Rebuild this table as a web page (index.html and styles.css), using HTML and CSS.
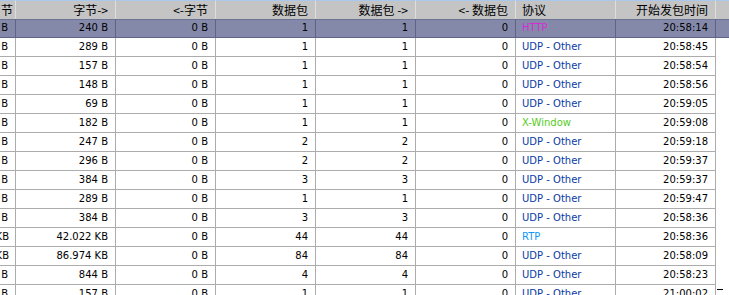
FILE: index.html
```html
<!DOCTYPE html>
<html lang="zh-CN">
<head>
<meta charset="utf-8">
<title>会话列表</title>
<link rel="stylesheet" href="styles.css">
</head>
<body>
<div class="view">
  <table class="grid">
    <thead>
      <tr>
        <th class="c-first clip">节</th>
        <th class="c-num">字节-&gt;</th>
        <th class="c-num">&lt;-字节</th>
        <th class="c-num">数据包</th>
        <th class="c-num">数据包 -&gt;</th>
        <th class="c-num">&lt;- 数据包</th>
        <th class="c-proto">协议</th>
        <th class="c-num">开始发包时间</th>
        <th class="c-fill"></th>
      </tr>
    </thead>
    <tbody>
      <tr class="sel"><td class="clip">B</td><td>240 B</td><td>0 B</td><td>1</td><td>1</td><td>0</td><td class="p"><span class="http">HTTP</span></td><td>20:58:14</td><td class="fill"></td></tr>
      <tr><td class="clip">B</td><td>289 B</td><td>0 B</td><td>1</td><td>1</td><td>0</td><td class="p"><span class="udp">UDP - Other</span></td><td>20:58:45</td><td class="fill"></td></tr>
      <tr><td class="clip">B</td><td>157 B</td><td>0 B</td><td>1</td><td>1</td><td>0</td><td class="p"><span class="udp">UDP - Other</span></td><td>20:58:54</td><td class="fill"></td></tr>
      <tr><td class="clip">B</td><td>148 B</td><td>0 B</td><td>1</td><td>1</td><td>0</td><td class="p"><span class="udp">UDP - Other</span></td><td>20:58:56</td><td class="fill"></td></tr>
      <tr><td class="clip">B</td><td>69 B</td><td>0 B</td><td>1</td><td>1</td><td>0</td><td class="p"><span class="udp">UDP - Other</span></td><td>20:59:05</td><td class="fill"></td></tr>
      <tr><td class="clip">B</td><td>182 B</td><td>0 B</td><td>1</td><td>1</td><td>0</td><td class="p"><span class="xw">X-Window</span></td><td>20:59:08</td><td class="fill"></td></tr>
      <tr><td class="clip">B</td><td>247 B</td><td>0 B</td><td>2</td><td>2</td><td>0</td><td class="p"><span class="udp">UDP - Other</span></td><td>20:59:18</td><td class="fill"></td></tr>
      <tr><td class="clip">B</td><td>296 B</td><td>0 B</td><td>2</td><td>2</td><td>0</td><td class="p"><span class="udp">UDP - Other</span></td><td>20:59:37</td><td class="fill"></td></tr>
      <tr><td class="clip">B</td><td>384 B</td><td>0 B</td><td>3</td><td>3</td><td>0</td><td class="p"><span class="udp">UDP - Other</span></td><td>20:59:37</td><td class="fill"></td></tr>
      <tr><td class="clip">B</td><td>289 B</td><td>0 B</td><td>1</td><td>1</td><td>0</td><td class="p"><span class="udp">UDP - Other</span></td><td>20:59:47</td><td class="fill"></td></tr>
      <tr><td class="clip">B</td><td>384 B</td><td>0 B</td><td>3</td><td>3</td><td>0</td><td class="p"><span class="udp">UDP - Other</span></td><td>20:58:36</td><td class="fill"></td></tr>
      <tr><td class="clip">KB</td><td>42.022 KB</td><td>0 B</td><td>44</td><td>44</td><td>0</td><td class="p"><span class="rtp">RTP</span></td><td>20:58:36</td><td class="fill"></td></tr>
      <tr><td class="clip">KB</td><td>86.974 KB</td><td>0 B</td><td>84</td><td>84</td><td>0</td><td class="p"><span class="udp">UDP - Other</span></td><td>20:58:09</td><td class="fill"></td></tr>
      <tr><td class="clip">B</td><td>844 B</td><td>0 B</td><td>4</td><td>4</td><td>0</td><td class="p"><span class="udp">UDP - Other</span></td><td>20:58:23</td><td class="fill"></td></tr>
      <tr><td class="clip">B</td><td>157 B</td><td>0 B</td><td>1</td><td>1</td><td>0</td><td class="p"><span class="udp">UDP - Other</span></td><td>21:00:02</td><td class="fill"></td></tr>
    </tbody>
  </table>
  <span class="cursor-mark"></span>
</div>
</body>
</html>
```
FILE: styles.css
```css
html, body {
  margin: 0;
  padding: 0;
  background: #ffffff;
}

.view {
  position: relative;
  width: 729px;
  height: 295px;
  overflow: hidden;
  background: #ffffff;
}

.grid {
  border-collapse: separate;
  border-spacing: 0;
  table-layout: fixed;
  width: 729px;
  font-family: "DejaVu Sans", sans-serif;
  font-size: 10px;
  color: #000000;
}

.grid th {
  box-sizing: border-box;
  width: 100px;
  height: 19px;
  padding: 0 7px 0 6px;
  background: #c4c4c4;
  border-top: 1px solid #a9c8ec;
  border-right: 1px solid #dedede;
  font-family: "Noto Sans CJK SC", "DejaVu Sans", sans-serif;
  font-size: 12px;
  font-weight: normal;
  line-height: 16px;
  text-align: right;
  white-space: nowrap;
  overflow: hidden;
  vertical-align: middle;
}

.grid th.c-first {
  width: 16px;
}

.grid th.c-proto {
  text-align: left;
}

.grid th.c-fill {
  width: 13px;
  border-right: none;
  padding: 0;
}

.grid td {
  box-sizing: border-box;
  height: 19px;
  padding: 0 7px 0 6px;
  border-right: 1px solid #acacac;
  border-bottom: 1px solid #acacac;
  text-align: right;
  white-space: pre;
  overflow: hidden;
  line-height: 12px;
  vertical-align: middle;
}

.grid .clip {
  direction: rtl;
  text-align: right;
  padding: 0 7px 0 0;
}

.grid th.clip {
  padding: 0 2px 0 0;
}

.grid td.p {
  text-align: left;
}

.grid td.fill {
  border-right: none;
  border-bottom: none;
  padding: 0;
}

.grid tr.sel td {
  background: #8489aa;
  border-right-color: #5e6485;
  border-bottom-color: #5e6485;
  box-shadow: inset 0 1px 0 #6d7394;
}

.grid tr.sel td.fill {
  border-bottom: 1px solid #5e6485;
}

.http { color: #d62bd6; }
.udp { color: #0a3aa6; }
.xw { color: #55cc22; }
.rtp { color: #0d98f5; }

.cursor-mark {
  position: absolute;
  left: 717px;
  top: 289px;
  width: 6px;
  height: 1px;
  background: #000000;
}
```
